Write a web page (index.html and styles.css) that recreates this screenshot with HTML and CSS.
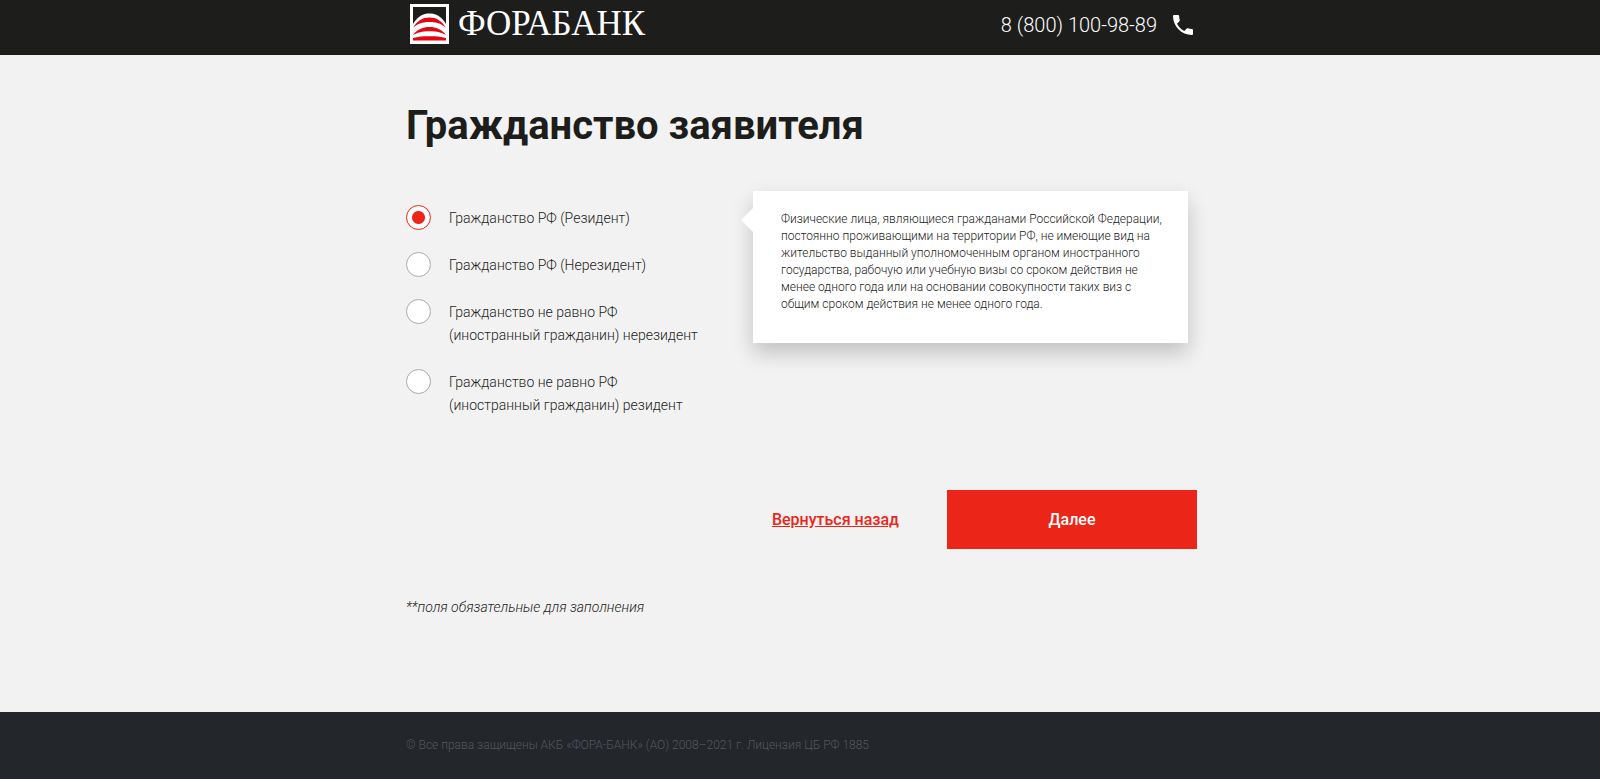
FILE: index.html
```html
<!DOCTYPE html>
<html lang="ru">
<head>
    <meta charset="UTF-8">
    <meta name="viewport" content="width=device-width, initial-scale=1">
    <title>Фора-Банк</title>
    <link rel="stylesheet" href="styles.css">
</head>
<body>
    <header class="header">
        <div class="container header-inner">
            <a class="logo" href="#">
                <svg class="logo-icon" width="39" height="40" viewBox="0 0 39 40">
                    <rect x="1.500" y="1.500" width="36" height="37" fill="#1d1d1b" stroke="#fff" stroke-width="3"/>
                    <path d="M3 37V20C8 12 13 9.500 19.500 9.500S31 12 36 20v17z" fill="#fff"/>
                    <path d="M3 24C7 16.500 13 13.500 19.500 13.500S32 16.500 36 24c-4-4-9-6-16.500-6S7 20 3 24z" fill="#e30613"/>
                    <path d="M3 31c4-5.500 10-8 16.500-8S32 25.500 36 31c-4-2.500-9-3.800-16.500-3.800S7 28.500 3 31z" fill="#e30613"/>
                    <path d="M3 36.500V34c5-1.400 10-1.800 16.500-1.800S31 32.600 36 34v2.500z" fill="#e30613"/>
                </svg>
                <span class="logo-text">ФОРАБАНК</span>
            </a>
            <a class="phone" href="tel:88001009889">
                8 (800) 100-98-89
                <svg width="20" height="20" viewBox="3 3 18 18" fill="#fff">
                    <path d="M6.620 10.790c1.440 2.830 3.760 5.140 6.590 6.590l2.200-2.200c.27-.27.67-.36 1.020-.24 1.120.37 2.330.57 3.570.57.55 0 1 .45 1 1V20c0 .55-.45 1-1 1-9.390 0-17-7.610-17-17 0-.55.45-1 1-1h3.500c.55 0 1 .45 1 1 0 1.250.2 2.450.57 3.570.11.35.03.74-.25 1.020l-2.200 2.200z"/>
                </svg>
            </a>
        </div>
    </header>

    <main class="container main">
        <h1>Гражданство заявителя</h1>
        <form>
            <div class="row">
                <div class="options">
                    <label class="option">
                        <input type="radio" name="citizenship" checked>
                        <span>Гражданство РФ (Резидент)</span>
                    </label>
                    <label class="option">
                        <input type="radio" name="citizenship">
                        <span>Гражданство РФ (Нерезидент)</span>
                    </label>
                    <label class="option">
                        <input type="radio" name="citizenship">
                        <span>Гражданство не равно РФ<br>(иностранный гражданин) нерезидент</span>
                    </label>
                    <label class="option">
                        <input type="radio" name="citizenship">
                        <span>Гражданство не равно РФ<br>(иностранный гражданин) резидент</span>
                    </label>
                </div>
                <div class="hint">
                    Физические лица, являющиеся гражданами Российской Федерации, постоянно проживающими на территории РФ, не имеющие вид на жительство выданный уполномоченным органом иностранного государства, рабочую или учебную визы со сроком действия не менее одного года или на основании совокупности таких виз с общим сроком действия не менее одного года.
                </div>
            </div>
            <div class="actions">
                <a class="back" href="#">Вернуться назад</a>
                <button class="next" type="button">Далее</button>
            </div>
        </form>
        <p class="note">**поля обязательные для заполнения</p>
    </main>

    <footer class="footer">
        <div class="container">© Все права защищены АКБ «ФОРА-БАНК» (АО) 2008–2021 г. Лицензия ЦБ РФ 1885</div>
    </footer>
</body>
</html>
```
FILE: styles.css
```css
* {
    box-sizing: border-box;
}

body {
    display: flex;
    flex-direction: column;
    min-height: 100vh;
    margin: 0;
    font-family: Roboto, "Liberation Sans", sans-serif;
    font-weight: 300;
    color: #1d1d1b;
    background-color: #f2f2f2;
}

.container {
    width: 100%;
    max-width: 1140px;
    margin: 0 auto;
    padding: 0 173px 0 176px;
}

.header {
    background-color: #1d1d1b;
}

.header-inner {
    display: flex;
    align-items: flex-start;
    justify-content: space-between;
    height: 55px;
}

.logo {
    display: flex;
    align-items: center;
    gap: 9px;
    margin: 3px 4px;
    color: #fff;
    text-decoration: none;
}

.logo-text {
    font-family: "Liberation Serif", serif;
    font-size: 35px;
    font-weight: 400;
    line-height: 42px;
}

.phone {
    display: flex;
    align-items: center;
    gap: 16px;
    padding: 13px 4px 0 0;
    font-size: 20px;
    line-height: 24px;
    color: #fff;
    text-decoration: none;
}

.main {
    flex: 1;
}

h1 {
    margin: 47px 0 41px;
    font-size: 40px;
    font-weight: 700;
    line-height: 48px;
}

.row {
    display: flex;
    align-items: flex-start;
    justify-content: space-between;
    padding-right: 9px;
}

.options {
    display: flex;
    flex-direction: column;
    gap: 24px;
    padding-top: 16px;
}

.option {
    display: flex;
    align-items: flex-start;
    gap: 18px;
    font-size: 14px;
    line-height: 23px;
    cursor: pointer;
}

.option input {
    flex: none;
    width: 25px;
    height: 25px;
    margin: -2px 0 0;
    border: 1px solid #aaa;
    border-radius: 50%;
    background-color: #fff;
    appearance: none;
}

.option input:checked {
    border-color: #eb2619;
    background-image: radial-gradient(circle, #eb2619 6px, transparent 7px);
}

.hint {
    position: relative;
    width: 435px;
    min-height: 152px;
    padding: 20px 20px 30px 28px;
    font-size: 12px;
    line-height: 17px;
    background-color: #fff;
    box-shadow: 0 10px 20px rgba(0, 0, 0, 0.2);
}

.hint::before {
    content: "";
    position: absolute;
    top: 17px;
    left: -12px;
    border: 12px solid transparent;
    border-left: 0;
    border-right-color: #fff;
}

.actions {
    display: flex;
    align-items: center;
    justify-content: flex-end;
    gap: 48px;
    margin-top: 73px;
}

.back {
    font-size: 16px;
    font-weight: 500;
    color: #eb2619;
}

.next {
    width: 250px;
    height: 59px;
    border: none;
    font-family: inherit;
    font-size: 16px;
    font-weight: 500;
    color: #fff;
    background-color: #eb2619;
    cursor: pointer;
}

.note {
    margin: 48px 0;
    font-size: 14px;
    font-style: italic;
    line-height: 20px;
}

.footer {
    padding: 23px 0;
    font-size: 12px;
    line-height: 21px;
    color: #55585b;
    background-color: #23262b;
}
```
